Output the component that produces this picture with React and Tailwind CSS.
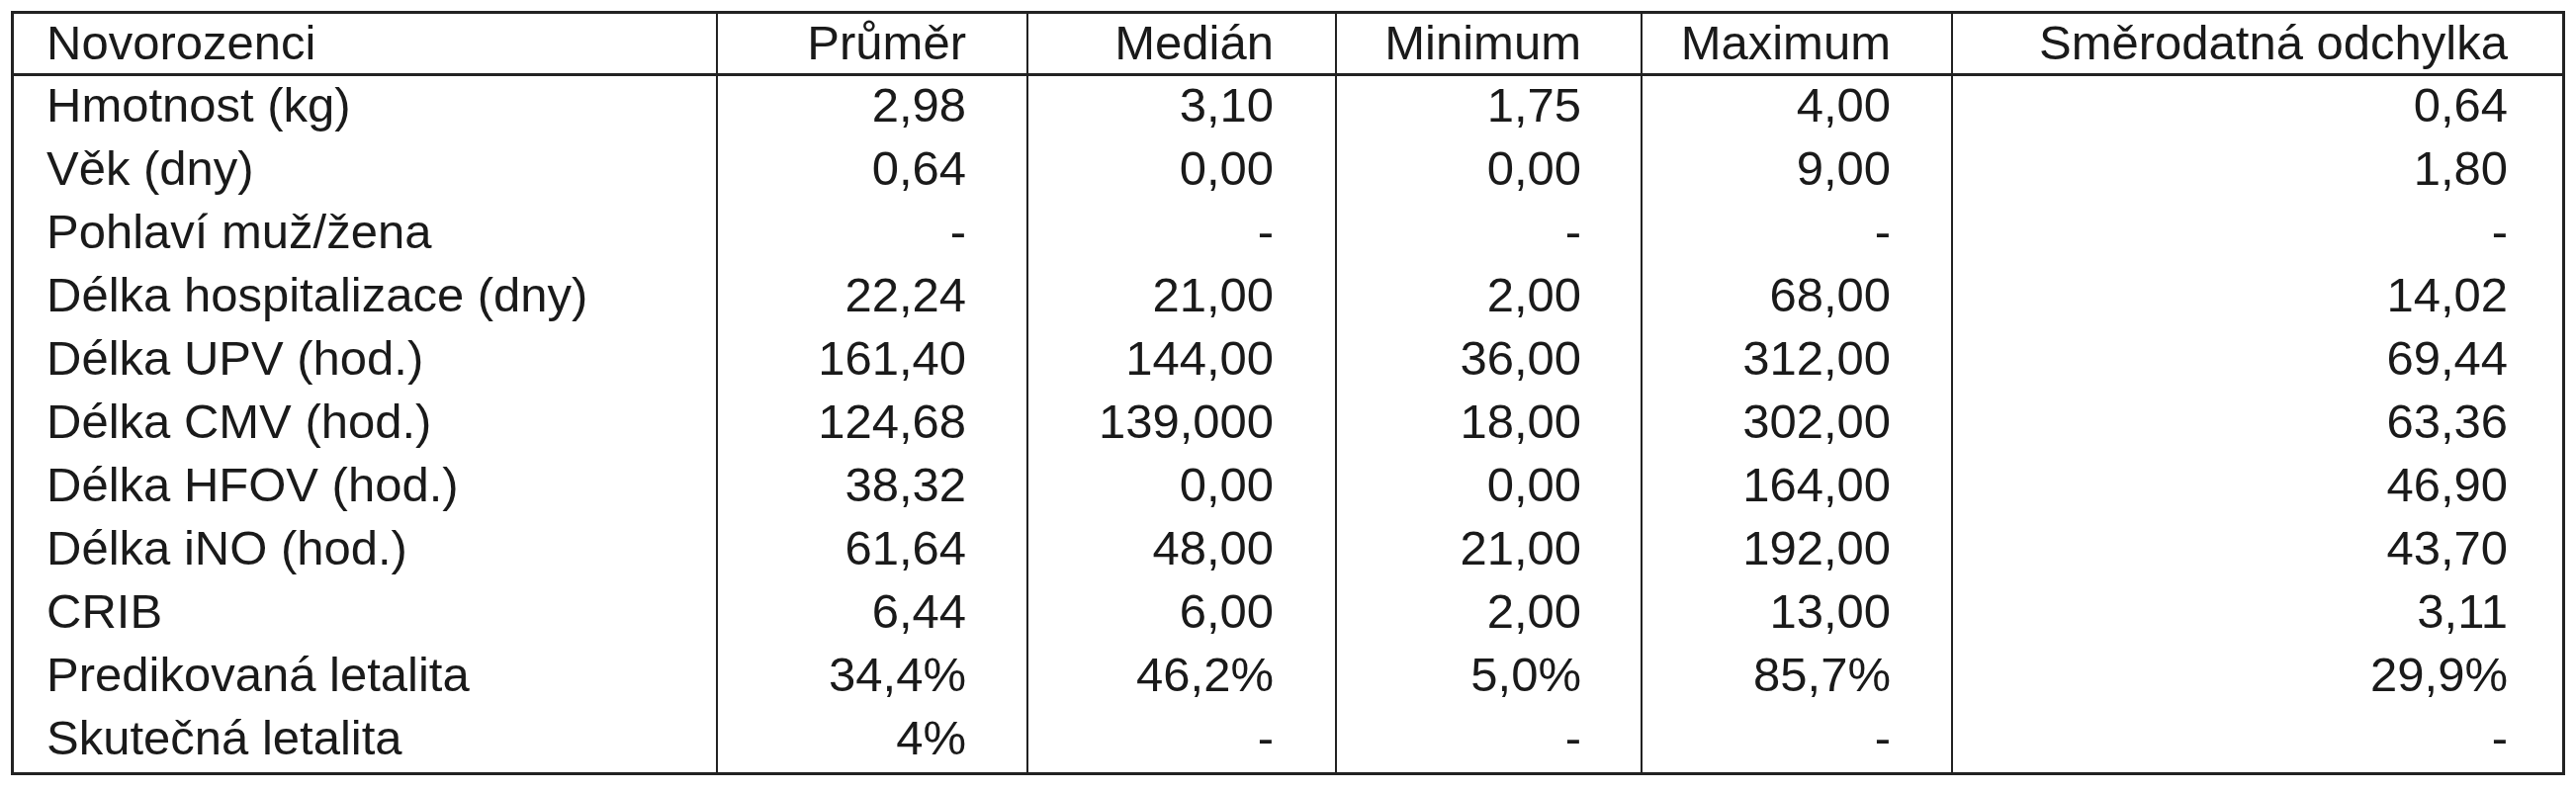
const columns = ['Novorozenci', 'Průměr', 'Medián', 'Minimum', 'Maximum', 'Směrodatná odchylka'];

const rows = [
  ['Hmotnost (kg)', '2,98', '3,10', '1,75', '4,00', '0,64'],
  ['Věk (dny)', '0,64', '0,00', '0,00', '9,00', '1,80'],
  ['Pohlaví muž/žena', '-', '-', '-', '-', '-'],
  ['Délka hospitalizace (dny)', '22,24', '21,00', '2,00', '68,00', '14,02'],
  ['Délka UPV (hod.)', '161,40', '144,00', '36,00', '312,00', '69,44'],
  ['Délka CMV (hod.)', '124,68', '139,000', '18,00', '302,00', '63,36'],
  ['Délka HFOV (hod.)', '38,32', '0,00', '0,00', '164,00', '46,90'],
  ['Délka iNO (hod.)', '61,64', '48,00', '21,00', '192,00', '43,70'],
  ['CRIB', '6,44', '6,00', '2,00', '13,00', '3,11'],
  ['Predikovaná letalita', '34,4%', '46,2%', '5,0%', '85,7%', '29,9%'],
  ['Skutečná letalita', '4%', '-', '-', '-', '-'],
];

// cell classes per column: first is left aligned, the rest right aligned
const cellClass = [
  'pl-[33px] text-left border-r-2 border-[#222]',
  'pr-[61px] text-right border-r-2 border-[#222]',
  'pr-[62px] text-right border-r-2 border-[#222]',
  'pr-[60px] text-right border-r-2 border-[#222]',
  'pr-[61px] text-right border-r-2 border-[#222]',
  'pr-[55px] text-right',
];

function Row({ cells, header }) {
  return (
    <div
      className={`grid grid-cols-[712px_314px_312px_309px_314px_1fr] ${
        header ? 'h-[63px] border-b-[3px] border-[#222]' : 'h-[64px]'
      }`}
    >
      {cells.map((c, i) => (
        <div key={i} className={`${cellClass[i]} leading-[58px] whitespace-nowrap`}>
          {c}
        </div>
      ))}
    </div>
  );
}

export default function App() {
  return (
    <div className="w-[2605px] h-[800px] bg-white pt-[11px] pl-[11px]">
      <div
        className="w-[2583px] border-[3px] border-[#222] text-[49px] text-[#1a1a1a]"
        style={{ fontFamily: '"Liberation Sans", Arial, sans-serif' }}
      >
        <Row cells={columns} header />
        {rows.map((r) => (
          <Row key={r[0]} cells={r} />
        ))}
      </div>
    </div>
  );
}
